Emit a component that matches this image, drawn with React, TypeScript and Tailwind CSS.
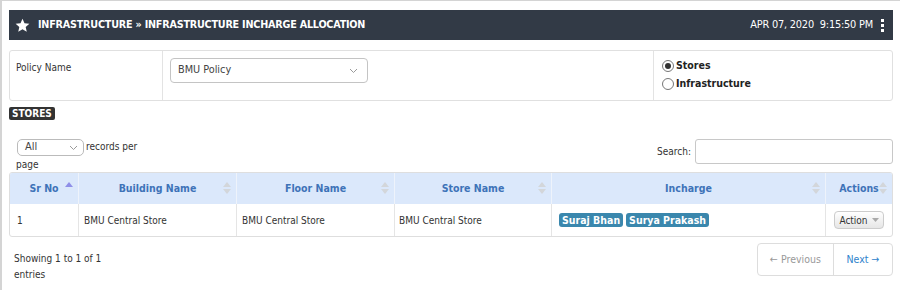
import { useState } from "react";

const cols = [
  { name: "Sr No", w: "w-[69px]", sort: "asc" },
  { name: "Building Name", w: "w-[158px]", sort: "both" },
  { name: "Floor Name", w: "w-[158px]", sort: "both" },
  { name: "Store Name", w: "w-[157px]", sort: "both" },
  { name: "Incharge", w: "w-[274px]", sort: "both" },
  { name: "Actions", w: "flex-1", sort: "both" },
];

const SortIcon = ({ dir }: { dir: string }) => (
  <svg width="8" height="14" viewBox="0 0 8 14" className="absolute right-[5px] top-[8px]">
    {dir === "asc" ? (
      <path d="M0 6 L4 1 L8 6 Z" fill="#8f8fe8" />
    ) : (
      <>
        <path d="M0 6 L4 1 L8 6 Z" fill="#d3d6da" />
        <path d="M0 8 L4 13 L8 8 Z" fill="#d3d6da" />
      </>
    )}
  </svg>
);

const Chevron = () => (
  <svg width="9" height="6" viewBox="0 0 9 6" fill="none" stroke="#9a9a9a" strokeWidth="1">
    <path d="M1 1 L4.5 4.5 L8 1" />
  </svg>
);

export default function App() {
  const [mode, setMode] = useState("stores");

  return (
    <div className="w-[900px] h-[290px] bg-white border-l-2 border-t border-[#d4d4d4] pl-[7px] pr-[7px] pt-[9px] font-['DejaVu_Sans_Condensed','DejaVu_Sans',sans-serif] text-[10px] text-[#333] overflow-hidden">
      {/* title bar */}
      <div className="h-[30px] bg-[#323a46] flex items-center pl-[6px] pr-[9px] text-white">
        <svg width="15" height="15" viewBox="0 0 24 24" fill="white">
          <path d="M12 1 L15.2 8.2 L23 9 L17.1 14.3 L18.8 22 L12 18 L5.2 22 L6.9 14.3 L1 9 L8.8 8.2 Z" />
        </svg>
        <span className="ml-[8px] font-bold text-[10.7px] tracking-[-0.2px]">
          INFRASTRUCTURE » INFRASTRUCTURE INCHARGE ALLOCATION
        </span>
        <span className="ml-auto text-[10.9px] tracking-[-0.2px]">APR 07, 2020&nbsp;&nbsp;9:15:50 PM</span>
        <span className="ml-[8px] flex flex-col gap-[2px]">
          <span className="w-[3px] h-[3px] bg-white"></span>
          <span className="w-[3px] h-[3px] bg-white"></span>
          <span className="w-[3px] h-[3px] bg-white"></span>
        </span>
      </div>

      {/* policy panel */}
      <div className="mt-[10px] h-[51px] border border-[#e0e0e0] rounded-[3px] flex">
        <div className="w-[153px] border-r border-[#e3e3e3] pl-[6px] pt-[9px]">Policy Name</div>
        <div className="w-[491px] border-r border-[#e3e3e3] pl-[7px] pt-[7px]">
          <div className="w-[198px] h-[25px] border border-[#c4c4c4] rounded-[4px] flex items-center justify-between pl-[7px] pr-[9px] text-[10.8px] text-[#444]">
            <span>BMU Policy</span>
            <Chevron />
          </div>
        </div>
        <div className="flex-1 pl-[8px] pt-[7px] flex flex-col gap-[2px] font-bold text-[10.5px] text-[#222]">
          <label className="flex items-center gap-[2px] h-[16px]" onClick={() => setMode("stores")}>
            <span className="w-[12px] h-[12px] rounded-full border border-[#777] flex items-center justify-center bg-white">
              {mode === "stores" && <span className="w-[6px] h-[6px] rounded-full bg-[#333]"></span>}
            </span>
            Stores
          </label>
          <label className="flex items-center gap-[2px] h-[16px]" onClick={() => setMode("infra")}>
            <span className="w-[12px] h-[12px] rounded-full border border-[#777] flex items-center justify-center bg-white">
              {mode === "infra" && <span className="w-[6px] h-[6px] rounded-full bg-[#333]"></span>}
            </span>
            Infrastructure
          </label>
        </div>
      </div>

      <div className="mt-[6px] inline-block bg-[#333] text-white font-bold text-[10px] leading-[13px] px-[3px] rounded-[2px]">
        STORES
      </div>

      {/* table controls */}
      <div className="mt-[18px] flex items-start justify-between">
        <div className="pl-[8px] w-[140px]">
          <div className="flex items-start">
            <div className="w-[67px] h-[17px] border border-[#bbb] rounded-[5px] flex items-center justify-between pl-[7px] pr-[5px] text-[11px] text-[#444]">
              <span>All</span>
              <Chevron />
            </div>
            <span className="ml-[2px] leading-[15px]">records per</span>
          </div>
          <div className="-ml-[1px] mt-[1px] leading-[15px]">page</div>
        </div>
        <div className="flex items-center">
          <span className="mr-[4px]">Search:</span>
          <div className="w-[198px] h-[25px] border border-[#c8c8c8] rounded-[3px]"></div>
        </div>
      </div>

      {/* table */}
      <div className="border border-[#dedede] rounded-[3px] overflow-hidden">
        <div className="flex h-[31px] bg-[#dbe8fb] font-bold text-[10.5px] text-[#3e73b8]">
          {cols.map((c, i) => (
            <div
              key={c.name}
              className={`${c.w} relative flex items-center justify-center ${i < cols.length - 1 ? "border-r border-[#eef3fb]" : ""}`}
            >
              {c.name}
              <SortIcon dir={c.sort} />
            </div>
          ))}
        </div>
        <div className="flex h-[32px] items-center">
          <div className="w-[69px] h-full border-r border-[#e5e5e5] flex items-center pl-[7px]">1</div>
          <div className="w-[158px] h-full border-r border-[#e5e5e5] flex items-center pl-[5px]">BMU Central Store</div>
          <div className="w-[158px] h-full border-r border-[#e5e5e5] flex items-center pl-[5px]">BMU Central Store</div>
          <div className="w-[157px] h-full border-r border-[#e5e5e5] flex items-center pl-[4px]">BMU Central Store</div>
          <div className="w-[274px] h-full border-r border-[#e5e5e5] flex items-center pl-[7px] gap-[3px]">
            <span className="bg-[#3a87ad] text-white font-bold text-[10.5px] leading-[14px] px-[3px] rounded-[3px]">Suraj Bhan</span>
            <span className="bg-[#3a87ad] text-white font-bold text-[10.5px] leading-[14px] px-[3px] rounded-[3px]">Surya Prakash</span>
          </div>
          <div className="flex-1 h-full flex items-center justify-center">
            <div className="h-[18px] px-[4px] flex items-center gap-[4px] border border-[#ccc] rounded-[4px] bg-gradient-to-b from-white to-[#e6e6e6] text-[10px] text-[#333]">
              Action
              <svg width="7" height="4" viewBox="0 0 7 4"><path d="M0 0 L7 0 L3.5 4 Z" fill="#aaa" /></svg>
            </div>
          </div>
        </div>
      </div>

      {/* footer */}
      <div className="flex justify-between items-start">
        <div className="mt-[14px] pl-[5px] leading-[16px]">
          Showing 1 to 1 of 1
          <br />
          entries
        </div>
        <div className="mt-[6px] flex h-[33px] border border-[#ddd] rounded-[4px] text-[10.5px]">
          <div className="w-[76px] border-r border-[#ddd] flex items-center justify-center text-[#999]">← Previous</div>
          <div className="w-[58px] flex items-center justify-center text-[#2f83cc]">Next →</div>
        </div>
      </div>
    </div>
  );
}
